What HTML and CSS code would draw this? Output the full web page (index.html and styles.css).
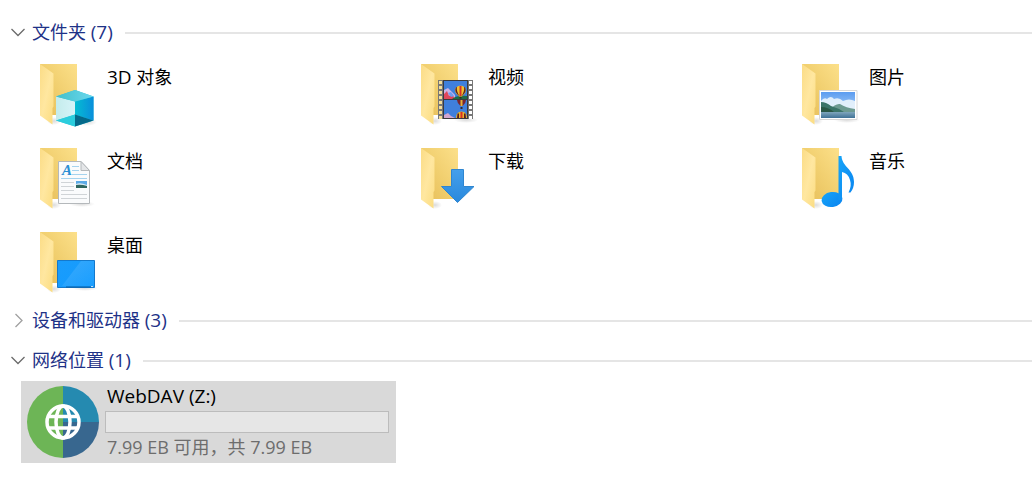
FILE: index.html
```html
<!DOCTYPE html>
<html lang="zh-CN">
<head>
  <meta charset="UTF-8" />
  <meta name="viewport" content="width=device-width, initial-scale=1.0" />
  <title>此电脑</title>
  <link rel="stylesheet" href="styles.css">
</head>
<body>

  <!-- shared shapes -->
  <svg class="defs" width="0" height="0" aria-hidden="true">
    <defs>
      <linearGradient id="back" x1="0" y1="1" x2="1" y2="0">
        <stop offset="0" stop-color="#e6bd58" />
        <stop offset="0.5" stop-color="#f1cf6f" />
        <stop offset="1" stop-color="#fce08a" />
      </linearGradient>
      <linearGradient id="flap" x1="0" y1="0" x2="1" y2="1">
        <stop offset="0" stop-color="#fbdc86" />
        <stop offset="0.5" stop-color="#ffe7a0" />
        <stop offset="1" stop-color="#fbdc80" />
      </linearGradient>
      <linearGradient id="cubeLeft" x1="0" y1="0" x2="1" y2="0">
        <stop offset="0" stop-color="#c4ecec" />
        <stop offset="1" stop-color="#d6f3f8" />
      </linearGradient>
      <linearGradient id="cubeRight" x1="0" y1="0" x2="1" y2="0">
        <stop offset="0" stop-color="#05bcd2" />
        <stop offset="1" stop-color="#0a8edb" />
      </linearGradient>
      <linearGradient id="cubeTop" x1="0" y1="0" x2="1" y2="0">
        <stop offset="0" stop-color="#43bfcb" />
        <stop offset="1" stop-color="#6ad8ee" />
      </linearGradient>
      <linearGradient id="sky" x1="0" y1="0" x2="0" y2="1">
        <stop offset="0" stop-color="#5b9cf0" />
        <stop offset="1" stop-color="#c9e3fa" />
      </linearGradient>
      <linearGradient id="sea" x1="0" y1="0" x2="0" y2="1">
        <stop offset="0" stop-color="#7fa6bd" />
        <stop offset="1" stop-color="#3f7196" />
      </linearGradient>
      <linearGradient id="arrow" x1="0" y1="0" x2="0" y2="1">
        <stop offset="0" stop-color="#459feb" />
        <stop offset="1" stop-color="#2989dd" />
      </linearGradient>
      <linearGradient id="note" x1="0" y1="0" x2="1" y2="1">
        <stop offset="0" stop-color="#16a4f8" />
        <stop offset="1" stop-color="#0a84f0" />
      </linearGradient>
      <linearGradient id="screen" x1="0" y1="0" x2="1" y2="1">
        <stop offset="0" stop-color="#1a9cfb" />
        <stop offset="1" stop-color="#129bff" />
      </linearGradient>
      <linearGradient id="glare" x1="0" y1="0" x2="1" y2="1">
        <stop offset="0" stop-color="#fff" stop-opacity="0.14" />
        <stop offset="1" stop-color="#fff" stop-opacity="0.03" />
      </linearGradient>
      <radialGradient id="shade">
        <stop offset="0" stop-color="#000" stop-opacity="0.14" />
        <stop offset="1" stop-color="#000" stop-opacity="0" />
      </radialGradient>
    </defs>
    <symbol id="folder" viewBox="0 0 72 72">
      <ellipse cx="27" cy="63" rx="7" ry="4" fill="url(#shade)" />
      <path d="M13 6H50V57H13z" fill="url(#back)" />
      <path d="M13 6L26.500 15.500V48.500L25.500 50V66.500L13 57.500z" fill="url(#flap)" />
    </symbol>
    <symbol id="balloon" viewBox="0 0 23 18">
      <path d="M0 0H23V18H0z" fill="#3f7fdc" />
      <path d="M0 9L4 7L7 10L11 14V18H0z" fill="#c9b4e6" />
      <path d="M0 13L3 10L5 15L8 13L11 18H0z" fill="#e0475c" />
      <path d="M4 12L7 11L10 15L7 16z" fill="#6f9cf0" />
      <path d="M8 18Q13 14 23 15V18H8z" fill="#1f6b45" />
      <path d="M11 9.500C11 3 22 3 22 9.500C22 12 19 14 18 15.500H15C14 14 11 12 11 9.500z" fill="#f0c12c" />
      <path d="M13 6Q12 10 15.500 15L14 14Q10 10 12 6.500z" fill="#5c1f24" />
      <path d="M15.500 5H17.500V15H15.500z" fill="#d8302a" />
      <path d="M20 6Q21 10 17.500 15L19 14Q23 10 21 6.500z" fill="#5c1f24" />
      <path d="M15.500 16H17.500V17.500H15.500z" fill="#3a2020" />
    </symbol>
  </svg>

  <main class="explorer">

    <section>
      <h2 class="group">
        <button type="button" aria-expanded="true">
          <svg class="chevron" viewBox="0 0 16 16"><path d="M1.500 4L8 10.500L14.500 4" /></svg>
          <span class="label">文件夹 <span class="latin">(7)</span></span>
        </button>
      </h2>
      <div class="tiles">

        <a class="tile" href="#objects">
          <svg class="icon" viewBox="0 0 72 72">
            <use href="#folder" />
            <ellipse cx="60" cy="64" rx="10" ry="4" fill="url(#shade)" />
            <path d="M48 32L66.500 38.500V62.500L48 68.500L29 62.500V38.500z" fill="#2cc4d8" />
            <path d="M29 38.500L48 43.500V56.500L29 62.500z" fill="url(#cubeLeft)" />
            <path d="M66.500 38.500L48 43.500V56.500L66.500 62.500z" fill="url(#cubeRight)" />
            <path d="M48 32L66.500 38.500L48 43.500L29 38.500z" fill="url(#cubeTop)" />
            <path d="M48 56.500L29 62.500L48 68.500z" fill="#2bcddd" />
            <path d="M48 56.500L66.500 62.500L48 68.500z" fill="#04698a" />
          </svg>
          <span class="name"><span class="latin">3D</span> 对象</span>
        </a>

        <a class="tile" href="#videos">
          <svg class="icon" viewBox="0 0 72 72">
            <use href="#folder" />
            <ellipse cx="58" cy="62" rx="12" ry="3" fill="url(#shade)" />
            <path d="M30 22H65V61H30z" fill="#3b3b3d" />
            <path d="M30 22H35V61H30zM60 22H65V61H60z" fill="#777" />
            <path d="M32.500 23V61" stroke="#f3dc98" stroke-width="3" stroke-dasharray="3 2" />
            <path d="M62.500 23V61" stroke="#fff" stroke-width="3" stroke-dasharray="3 2" />
            <use href="#balloon" x="36" y="23" width="23" height="18" />
            <path d="M36 42H59V60H36z" fill="#3f7fdc" />
            <path d="M49 42H58Q58 45 54.500 48H52.500Q49 45 49 42z" fill="#7b2530" />
            <path d="M52.500 42H54.500V48H52.500z" fill="#e2b13a" />
            <path d="M52.500 49H54.500V51H52.500z" fill="#33262a" />
            <path d="M36 57L40 55L43 58L47 60H36z" fill="#d3a7cf" />
            <path d="M48 60Q48 53.500 53.500 53.500T59 60z" fill="#e8b52a" />
            <path d="M52.500 54H54.500V60H52.500z" fill="#d8302a" />
            <path d="M49.500 55.500H51V60H49zM56 55.500H57.500L58 60H56z" fill="#5c1f24" />
          </svg>
          <span class="name">视频</span>
        </a>

        <a class="tile" href="#pictures">
          <svg class="icon" viewBox="0 0 72 72">
            <use href="#folder" />
            <ellipse cx="58" cy="62" rx="13" ry="3" fill="url(#shade)" />
            <path d="M30.500 32.500H68V61.500H30.500z" fill="#fff" stroke="#d8d8d8" />
            <path d="M32 34H66V60H32z" fill="url(#sky)" />
            <path d="M32 43Q35 39 38 41Q42 37 45 41Q50 39 54 43Q60 40 66 43V53H32z" fill="#eaf4fc" opacity="0.9" />
            <path d="M40 52Q47 45 51 46Q57 50 66 51V54H40z" fill="#6d9a91" />
            <path d="M32 44Q37 44 42 48Q49 50 55 54H32z" fill="#3b7468" />
            <path d="M32 49Q39 49 45 54H32z" fill="#2a5745" />
            <path d="M32 54H66V60H32z" fill="url(#sea)" />
          </svg>
          <span class="name">图片</span>
        </a>

        <a class="tile" href="#documents">
          <svg class="icon" viewBox="0 0 72 72">
            <use href="#folder" />
            <ellipse cx="55" cy="62" rx="13" ry="3" fill="url(#shade)" />
            <path d="M31.500 19.500H54L62.500 28.500V61.500H31.500z" fill="#fafbfc" stroke="#b4b8bb" />
            <path d="M54 19.500V28.500H62.500z" fill="#e4e6e8" stroke="#b4b8bb" />
            <text class="letter" x="35" y="33">A</text>
            <path d="M45 24.500H52M45 28.500H52M45 32.500H60M34 36.500H60" stroke="#a5d3ee" />
            <path d="M34 40.500H47M34 44.500H47M34 48.500H47M34 52.500H60M34 56.500H60" stroke="#d0d4d7" />
            <path d="M49 39H60V46H49z" fill="#5ba9e6" />
            <path d="M49 42Q53 40 60 43V44H49z" fill="#d7ebf5" />
            <path d="M49 43Q54 42 60 44V46H49z" fill="#2f665f" />
          </svg>
          <span class="name">文档</span>
        </a>

        <a class="tile" href="#downloads">
          <svg class="icon" viewBox="0 0 72 72">
            <use href="#folder" />
            <path d="M43.500 27.500H55.500V44.500H66L49.500 60.500L33.500 44.500H43.500z" fill="url(#arrow)" stroke="#2f86d0" />
          </svg>
          <span class="name">下载</span>
        </a>

        <a class="tile" href="#music">
          <svg class="icon" viewBox="0 0 72 72">
            <use href="#folder" />
            <ellipse cx="43" cy="57.500" rx="10.500" ry="7.500" transform="rotate(-8 43 57.500)" fill="url(#note)" />
            <path d="M49.500 14H52.500C53 25 65 27 65 40Q65 46 61.500 50.500H59.500Q63 44 61 38Q59 31 53 30V58H49.500z" fill="url(#note)" />
          </svg>
          <span class="name">音乐</span>
        </a>

        <a class="tile" href="#desktop">
          <svg class="icon" viewBox="0 0 72 72">
            <use href="#folder" />
            <ellipse cx="58" cy="62" rx="13" ry="3" fill="url(#shade)" />
            <path d="M30.500 34.500H67.500V61.500H30.500z" fill="url(#screen)" stroke="#1479cc" />
            <path d="M54 35H67V60H35z" fill="url(#glare)" />
            <path d="M39 61H64" stroke="#0c5d9e" />
            <path d="M64 60.500H66" stroke="#bfe0f8" />
          </svg>
          <span class="name">桌面</span>
        </a>

      </div>
    </section>

    <section class="collapsed">
      <h2 class="group">
        <button type="button" aria-expanded="false">
          <svg class="chevron" viewBox="0 0 16 16"><path d="M5.500 1L12 7.500L5.500 14" /></svg>
          <span class="label">设备和驱动器 <span class="latin">(3)</span></span>
        </button>
      </h2>
    </section>

    <section>
      <h2 class="group">
        <button type="button" aria-expanded="true">
          <svg class="chevron" viewBox="0 0 16 16"><path d="M1.500 4L8 10.500L14.500 4" /></svg>
          <span class="label">网络位置 <span class="latin">(1)</span></span>
        </button>
      </h2>
      <div class="tiles">
        <a class="tile selected" href="#webdav">
          <svg class="icon" viewBox="0 0 72 72">
            <path d="M36 0A36 36 0 0 0 36 72z" fill="#6db556" />
            <path d="M36 0A36 36 0 0 1 72 36H36z" fill="#258ab0" />
            <path d="M72 36A36 36 0 0 1 36 72V36z" fill="#38678f" />
            <g fill="none" stroke="#fff" stroke-width="3.500">
              <circle cx="36" cy="36" r="16" />
              <ellipse cx="36" cy="36" rx="7" ry="16" />
              <path d="M21 30.500H51M21 42H51" />
            </g>
          </svg>
          <div class="drive">
            <span class="name latin">WebDAV (Z:)</span>
            <progress value="0" max="100" aria-label="已用空间"></progress>
            <span class="space">7.99 EB 可用&#xFF0C;共 7.99 EB</span>
          </div>
        </a>
      </div>
    </section>

  </main>

</body>
</html>
```
FILE: styles.css
```css
body {
  margin: 0;
  background: #fff;
  color: #000;
  font-family: "Open Sans", "Noto Sans CJK SC", sans-serif;
  font-size: 18px;
  line-height: 24px;
}
.latin {
  font-size: 19px;
}
.defs {
  position: absolute;
}
.explorer {
  padding: 15px 0 20px;
}
.group {
  display: flex;
  align-items: center;
  gap: 12px;
  height: 36px;
  margin: 0 0 2px;
  padding-left: 10px;
}
.collapsed .group {
  margin-bottom: 4px;
}
.group::after {
  content: "";
  flex: 1;
  height: 2px;
  background: #e5e5e5;
}
.group button {
  display: flex;
  align-items: center;
  gap: 6px;
  padding: 0;
  border: none;
  background: none;
  color: #1e3287;
  font: inherit;
  font-weight: 400;
  font-size: 18px;
  line-height: 24px;
  white-space: nowrap;
  cursor: pointer;
}
.group .label {
  padding-bottom: 2px;
}
.chevron {
  width: 16px;
  height: 16px;
  fill: none;
  stroke: #6b6b6b;
  stroke-width: 1.3;
}
.collapsed .chevron {
  stroke: #a0a0a0;
}
.tiles {
  display: grid;
  grid-template-columns: 375px 375px 1fr;
  gap: 2px 6px;
  padding-left: 21px;
}
.tile {
  display: flex;
  gap: 8px;
  box-sizing: border-box;
  height: 82px;
  padding: 5px 6px;
  color: #000;
  text-decoration: none;
}
.tile.selected {
  background: #d9d9d9;
}
.icon {
  flex: none;
  width: 72px;
  height: 72px;
}
.tile > .name {
  margin-top: 7px;
}
.letter {
  font: italic bold 15px "Liberation Serif", serif;
  fill: #2a8fd4;
}
.drive {
  flex: 1;
  display: flex;
  flex-direction: column;
  margin-top: -2px;
}
.drive progress {
  appearance: none;
  flex: none;
  box-sizing: border-box;
  width: 284px;
  height: 22px;
  margin: 3px 0 2px -2px;
  border: 1px solid #bcbcbc;
  background: #e6e6e6;
}
.drive progress::-webkit-progress-bar {
  background: #e6e6e6;
}
.drive progress::-webkit-progress-value {
  background: #26a0da;
}
.drive .space {
  color: #6d6d6d;
}
```
